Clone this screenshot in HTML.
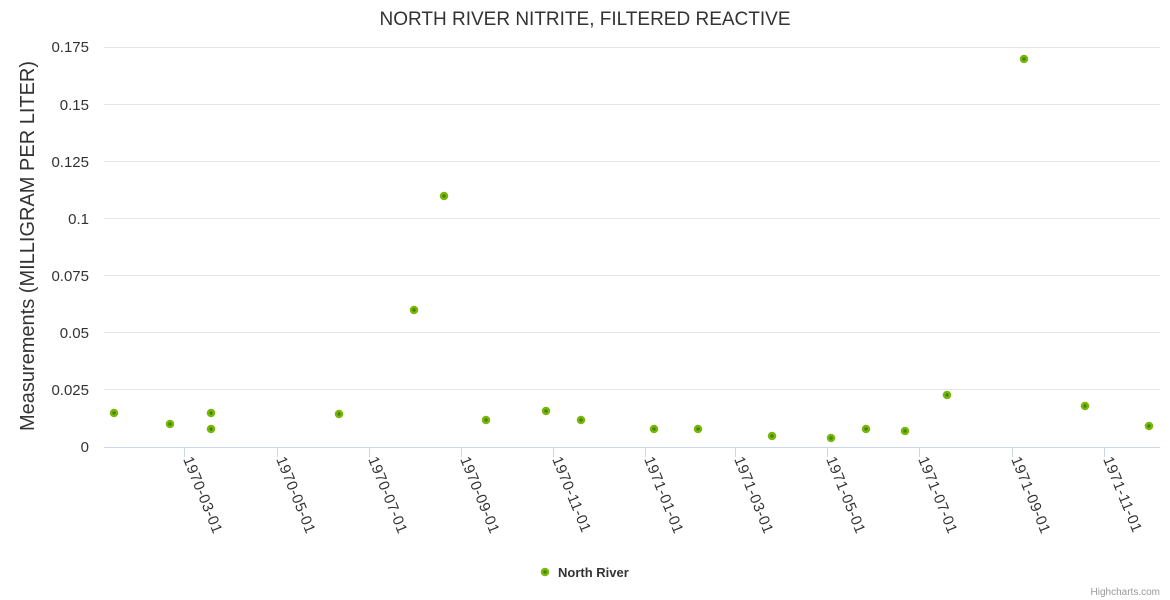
<!DOCTYPE html>
<html><head><meta charset="utf-8"><style>html,body{margin:0;padding:0;background:#fff}svg{display:block;font-family:"Liberation Sans",sans-serif}</style></head><body>
<svg width="1170" height="600" xmlns="http://www.w3.org/2000/svg">
<text x="585" y="25" text-anchor="middle" font-size="19" fill="#333">NORTH RIVER NITRITE, FILTERED REACTIVE</text>
<g stroke="#e6e6e6" stroke-width="1">
<line x1="104" x2="1160" y1="47.5" y2="47.5"/><line x1="104" x2="1160" y1="104.5" y2="104.5"/><line x1="104" x2="1160" y1="161.5" y2="161.5"/><line x1="104" x2="1160" y1="218.5" y2="218.5"/><line x1="104" x2="1160" y1="275.5" y2="275.5"/><line x1="104" x2="1160" y1="332.5" y2="332.5"/><line x1="104" x2="1160" y1="389.5" y2="389.5"/>
</g>
<line x1="104" x2="1160" y1="447.5" y2="447.5" stroke="#ccd6eb"/>
<g stroke="#ccd6eb">
<line x1="184.5" x2="184.5" y1="447" y2="457"/><line x1="277.5" x2="277.5" y1="447" y2="457"/><line x1="369.5" x2="369.5" y1="447" y2="457"/><line x1="461.5" x2="461.5" y1="447" y2="457"/><line x1="553.5" x2="553.5" y1="447" y2="457"/><line x1="645.5" x2="645.5" y1="447" y2="457"/><line x1="735.5" x2="735.5" y1="447" y2="457"/><line x1="827.5" x2="827.5" y1="447" y2="457"/><line x1="919.5" x2="919.5" y1="447" y2="457"/><line x1="1012.5" x2="1012.5" y1="447" y2="457"/><line x1="1104.5" x2="1104.5" y1="447" y2="457"/>
</g>
<g font-size="15" fill="#333" text-anchor="end">
<text x="89" y="52">0.175</text><text x="89" y="110">0.15</text><text x="89" y="167">0.125</text><text x="89" y="224">0.1</text><text x="89" y="281">0.075</text><text x="89" y="338">0.05</text><text x="89" y="395">0.025</text><text x="89" y="452">0</text>
</g>
<text transform="translate(34,246) rotate(-90)" text-anchor="middle" font-size="20" fill="#333">Measurements (MILLIGRAM PER LITER)</text>
<g font-size="15" fill="#333" letter-spacing="0.5">
<text transform="translate(183,459) rotate(68)">1970-03-01</text>
<text transform="translate(276,459) rotate(68)">1970-05-01</text>
<text transform="translate(368,459) rotate(68)">1970-07-01</text>
<text transform="translate(460,459) rotate(68)">1970-09-01</text>
<text transform="translate(552,459) rotate(68)">1970-11-01</text>
<text transform="translate(644,459) rotate(68)">1971-01-01</text>
<text transform="translate(734,459) rotate(68)">1971-03-01</text>
<text transform="translate(826,459) rotate(68)">1971-05-01</text>
<text transform="translate(918,459) rotate(68)">1971-07-01</text>
<text transform="translate(1011,459) rotate(68)">1971-09-01</text>
<text transform="translate(1103,459) rotate(68)">1971-11-01</text>
</g>
<g fill="#3d8c00" stroke="#7cb50b" stroke-width="2.5">
<circle cx="114" cy="413" r="3"/><circle cx="170" cy="424" r="3"/><circle cx="211" cy="413" r="3"/><circle cx="211" cy="429" r="3"/><circle cx="339" cy="414" r="3"/><circle cx="414" cy="310" r="3"/><circle cx="444" cy="196" r="3"/><circle cx="486" cy="420" r="3"/><circle cx="546" cy="411" r="3"/><circle cx="581" cy="420" r="3"/><circle cx="654" cy="429" r="3"/><circle cx="698" cy="429" r="3"/><circle cx="772" cy="436" r="3"/><circle cx="831" cy="438" r="3"/><circle cx="866" cy="429" r="3"/><circle cx="905" cy="431" r="3"/><circle cx="947" cy="395" r="3"/><circle cx="1024" cy="59" r="3"/><circle cx="1085" cy="406" r="3"/><circle cx="1149" cy="426" r="3"/>
<circle cx="545" cy="572" r="3"/>
</g>
<text x="558" y="577" font-size="13" font-weight="bold" fill="#333">North River</text>
<text x="1160" y="595" text-anchor="end" font-size="10" fill="#999">Highcharts.com</text>
</svg>
</body></html>
